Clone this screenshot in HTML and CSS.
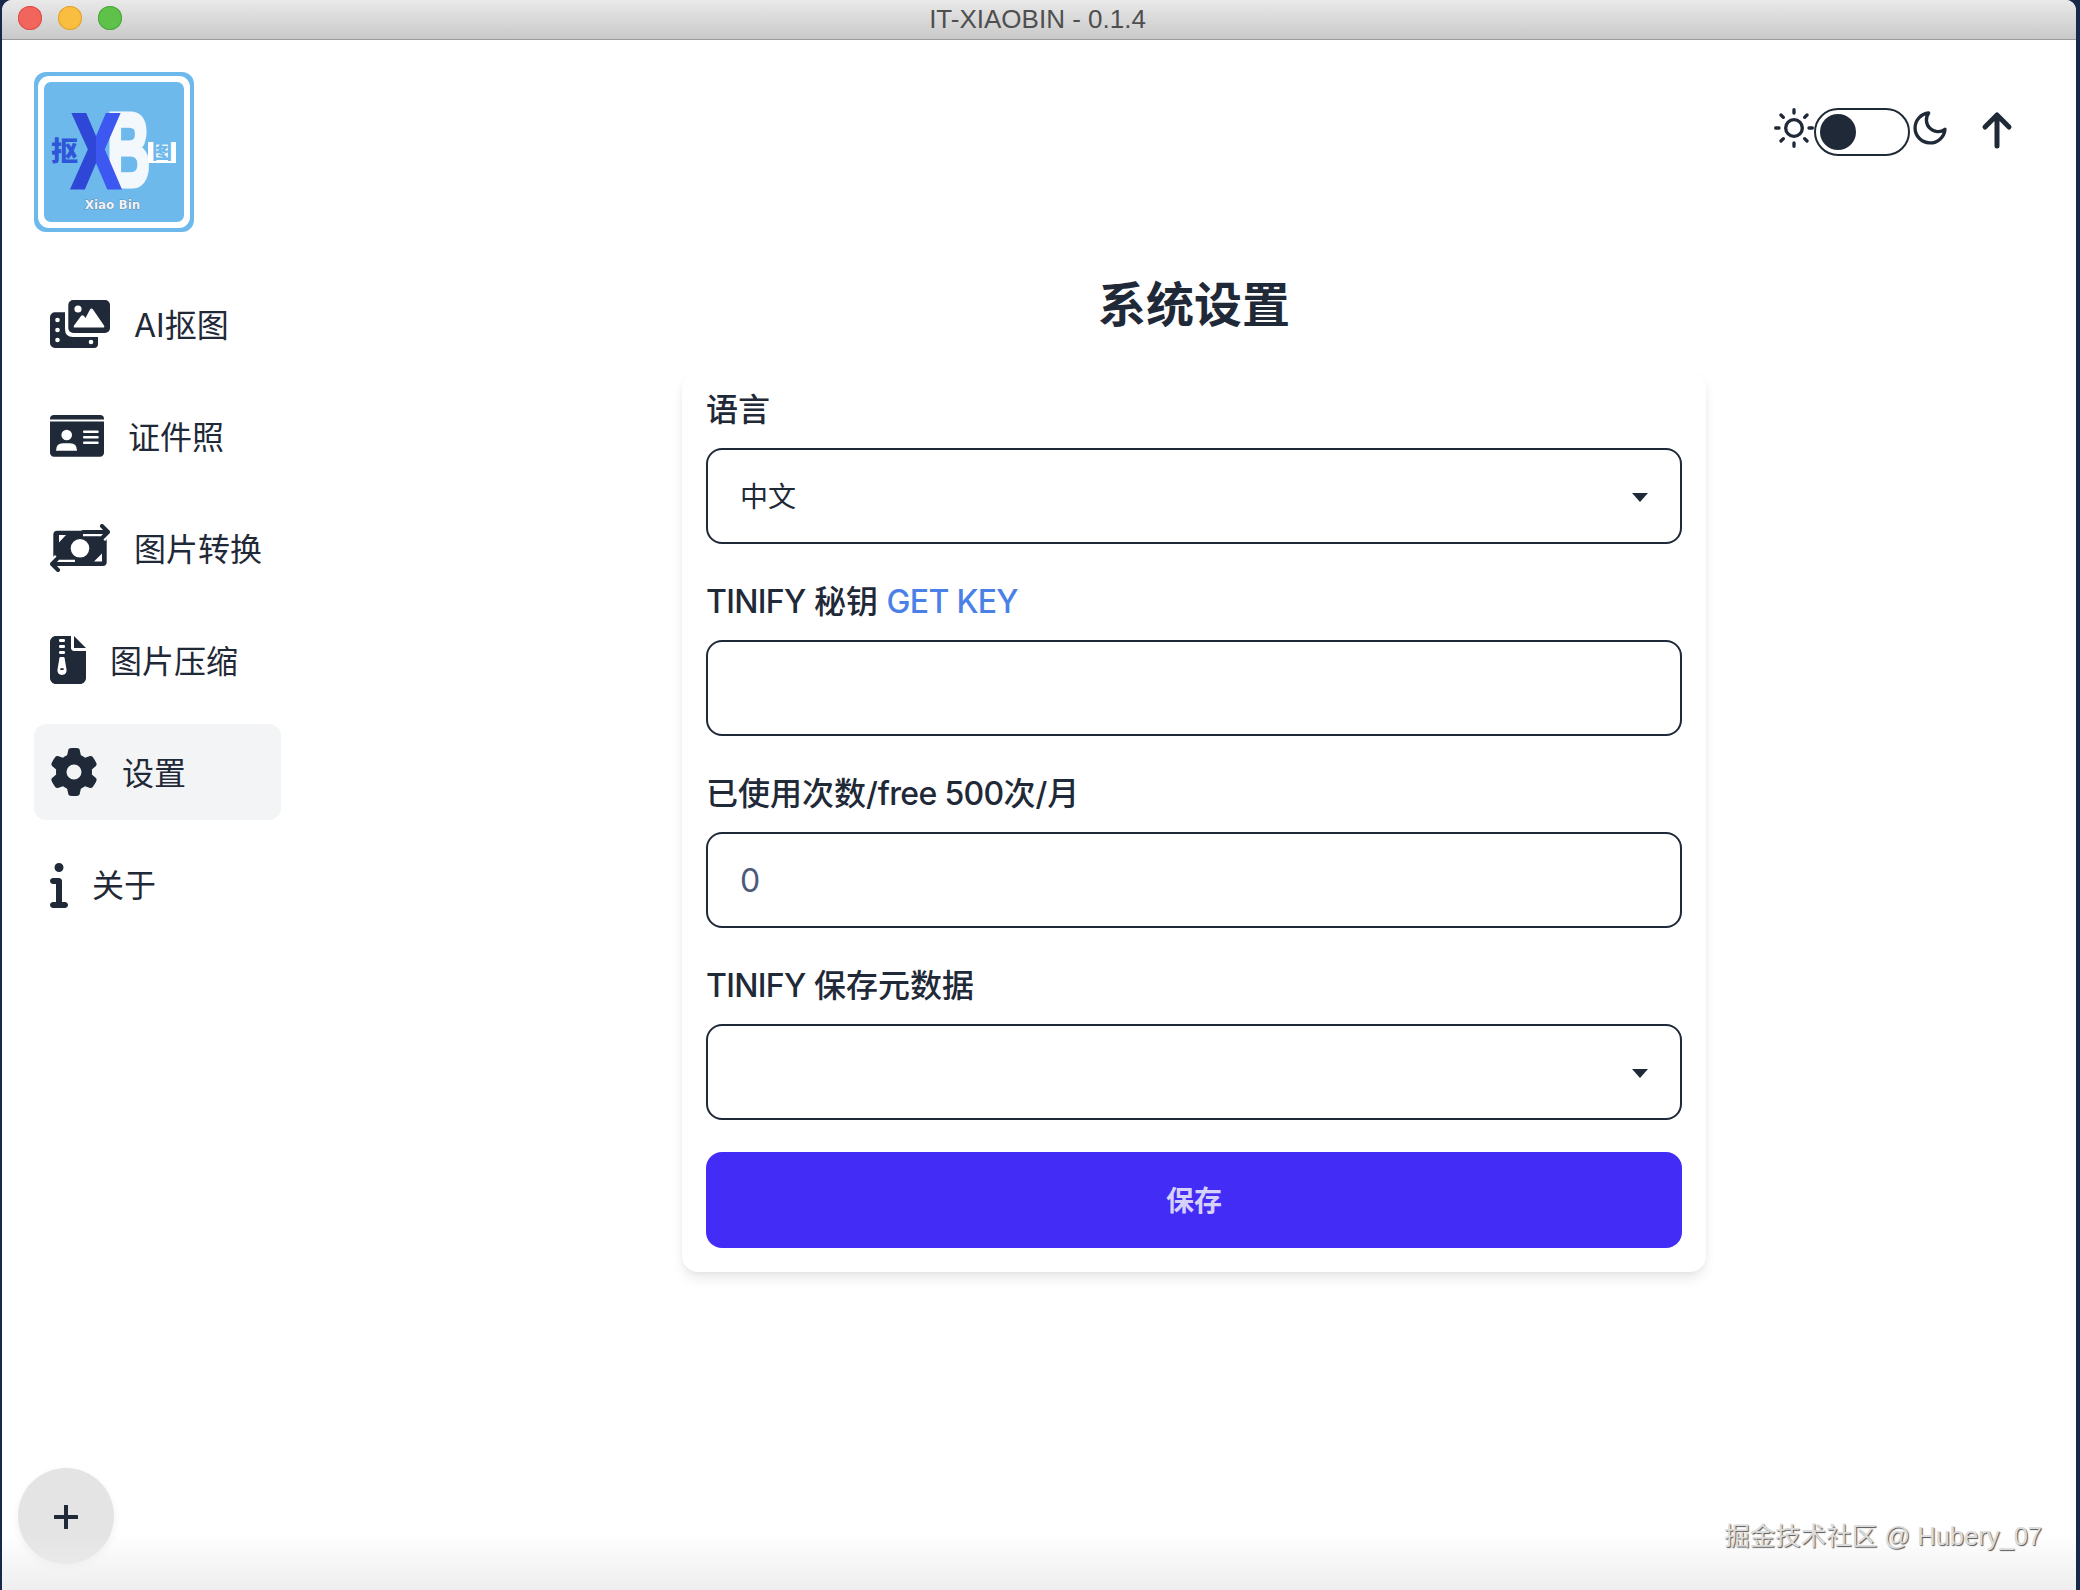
FILE: index.html
```html
<!DOCTYPE html>
<html lang="zh-CN">
<head>
<meta charset="utf-8">
<title>IT-XIAOBIN - 0.1.4</title>
<link rel="stylesheet" href="styles.css">
</head>
<body>
<div class="window">
  <header class="titlebar">
    <div class="lights">
      <span class="light light-red"></span>
      <span class="light light-yellow"></span>
      <span class="light light-green"></span>
    </div>
    <span class="window-title">IT-XIAOBIN - 0.1.4</span>
  </header>
  <div class="app">
    <aside class="sidebar">
      <svg class="logo" viewBox="0 0 160 160" aria-label="Xiao Bin">
        <defs>
          <linearGradient id="xfill" x1="0" x2="1" y1="0" y2="0">
            <stop offset="0.5" stop-color="#2f47d6"/>
            <stop offset="0.5" stop-color="#3c58f0"/>
          </linearGradient>
        </defs>
        <rect width="160" height="160" rx="12" fill="#6db9ec"/>
        <rect x="4" y="4" width="152" height="152" rx="11" fill="#fff"/>
        <rect x="10" y="10" width="140" height="140" rx="7" fill="#6db9ec"/>
        <text class="logo-b" x="73" y="114.500" transform="translate(73 0) scale(.58 1) translate(-73 0)">B</text>
        <text class="logo-x" x="38.500" y="114.500" stroke="url(#xfill)" fill="url(#xfill)" textLength="47" lengthAdjust="spacingAndGlyphs">X</text>
        <text class="logo-cjk logo-kou" x="17" y="89">抠</text>
        <rect x="114" y="70" width="28" height="21" fill="#fff"/>
        <text class="logo-cjk logo-tu" x="118" y="87">图</text>
        <text class="logo-name" x="78.500" y="137">Xiao Bin</text>
      </svg>
      <nav class="menu">
        <a class="menu-item">
          <svg class="icon icon-60" viewBox="0 0 60 48">
            <path d="M5 12.300H15V29Q15 37 23 37H48V44A4 4 0 0 1 44 48H5A5 5 0 0 1 0 43V17.300A5 5 0 0 1 5 12.300Z"/>
            <rect x="18.300" width="41.700" height="33" rx="5"/>
            <circle class="cut" cx="28" cy="9" r="3.600"/>
            <path class="cut" d="M25 27.500Q23 27.500 24 25.500L31 16Q32.500 14.500 34 16L35.500 18L40 9.500Q41.500 7.500 43 9.500L54 25.500Q55 27.500 53 27.500Z"/>
            <circle class="cut" cx="7.500" cy="20" r="2.300"/>
            <circle class="cut" cx="7.500" cy="30" r="2.300"/>
            <circle class="cut" cx="7.500" cy="40" r="2.300"/>
            <circle class="cut" cx="41" cy="42" r="2.300"/>
          </svg>
          <span>AI抠图</span>
        </a>
        <a class="menu-item">
          <svg class="icon icon-54" viewBox="0 0 54 42">
            <path d="M4 0H50A4 4 0 0 1 54 4V4.500H0V4A4 4 0 0 1 4 0Z"/>
            <path d="M0 6.500H54V37.500A4 4 0 0 1 50 41.700H4A4 4 0 0 1 0 37.500Z"/>
            <circle class="cut" cx="16.700" cy="20" r="5.300"/>
            <path class="cut" d="M6 35.700Q6 28.300 13 28.300H20Q27 28.300 27 35.700Z"/>
            <rect class="cut" x="33" y="15.500" width="15.700" height="2.600" rx="1"/>
            <rect class="cut" x="33" y="21" width="15.700" height="2.600" rx="1"/>
            <rect class="cut" x="33" y="26.500" width="15.700" height="2.600" rx="1"/>
          </svg>
          <span>证件照</span>
        </a>
        <a class="menu-item">
          <svg class="icon icon-60" viewBox="0 0 60 48">
            <rect x="3.300" y="6.700" width="53.400" height="35.300" rx="4"/>
            <circle class="cut" cx="30" cy="24.300" r="9.300"/>
            <path class="cut" d="M9 11H16L9 18.500Z"/>
            <path class="cut" d="M52 37.500H44L52 29.500Z"/>
            <path class="halo" d="M33 8H56M52 2L58 8L52 14"/>
            <path class="arrow" d="M33 8H56M52 2L58 8L52 14"/>
            <path class="halo" d="M25 40H4M8 34L2 40L8 46"/>
            <path class="arrow" d="M25 40H4M8 34L2 40L8 46"/>
          </svg>
          <span>图片转换</span>
        </a>
        <a class="menu-item">
          <svg class="icon icon-36" viewBox="0 0 384 512">
            <path d="M64 0C28.700 0 0 28.700 0 64V448c0 35.300 28.700 64 64 64H320c35.300 0 64-28.700 64-64V160H256c-17.700 0-32-14.300-32-32V0H64zM256 0V128H384L256 0z"/>
            <rect class="cut" x="96" y="32" width="64" height="32" rx="14"/>
            <rect class="cut" x="96" y="96" width="64" height="32" rx="14"/>
            <rect class="cut" x="96" y="160" width="64" height="32" rx="14"/>
            <path class="cut" d="M112 224h32q10 0 12 12l20 122c5 38-20 58-48 58s-53-20-48-58l20-122q2-12 12-12z"/>
            <rect x="108" y="344" width="40" height="18" rx="9"/>
          </svg>
          <span>图片压缩</span>
        </a>
        <a class="menu-item menu-item-active">
          <svg class="icon icon-48" viewBox="0 0 512 512">
            <path d="M495.900 166.600c3.200 8.700 .5 18.400-6.400 24.600l-43.300 39.400c1.100 8.300 1.700 16.800 1.700 25.400s-.6 17.100-1.700 25.400l43.300 39.400c6.900 6.200 9.600 15.900 6.400 24.600c-4.400 11.900-9.700 23.300-15.800 34.300l-4.700 8.100c-6.600 11-14 21.400-22.100 31.200c-5.900 7.200-15.700 9.600-24.500 6.800l-55.700-17.700c-13.400 10.300-28.200 18.900-44 25.400l-12.500 57.100c-2 9.100-9 16.300-18.200 17.800c-13.800 2.300-28 3.500-42.500 3.500s-28.700-1.200-42.500-3.500c-9.200-1.500-16.200-8.700-18.200-17.800l-12.500-57.100c-15.800-6.500-30.600-15.100-44-25.400L83.100 425.900c-8.800 2.800-18.600 .3-24.500-6.800c-8.100-9.800-15.500-20.200-22.100-31.200l-4.700-8.100c-6.100-11-11.400-22.400-15.800-34.300c-3.200-8.700-.5-18.400 6.400-24.600l43.300-39.400C64.600 273.100 64 264.600 64 256s.6-17.100 1.700-25.400L22.400 191.200c-6.900-6.200-9.600-15.900-6.400-24.600c4.400-11.900 9.700-23.300 15.800-34.300l4.700-8.100c6.600-11 14-21.400 22.100-31.200c5.900-7.200 15.700-9.600 24.500-6.800l55.700 17.700c13.400-10.300 28.200-18.900 44-25.400l12.500-57.100c2-9.100 9-16.300 18.200-17.800C227.300 1.200 241.500 0 256 0s28.700 1.200 42.500 3.500c9.200 1.500 16.200 8.700 18.200 17.800l12.500 57.100c15.800 6.500 30.600 15.100 44 25.400l55.700-17.700c8.800-2.800 18.600-.3 24.500 6.800c8.100 9.800 15.500 20.200 22.100 31.200l4.700 8.100c6.100 11 11.400 22.400 15.800 34.300zM256 336a80 80 0 1 0 0-160 80 80 0 1 0 0 160z"/>
          </svg>
          <span>设置</span>
        </a>
        <a class="menu-item">
          <svg class="icon icon-18" viewBox="0 0 192 512">
            <path d="M48 80a48 48 0 1 1 96 0A48 48 0 1 1 48 80zM0 224c0-17.700 14.300-32 32-32H96c17.700 0 32 14.300 32 32V448h32c17.700 0 32 14.300 32 32s-14.300 32-32 32H32c-17.700 0-32-14.300-32-32s14.300-32 32-32H64V256H32c-17.700 0-32-14.300-32-32z"/>
          </svg>
          <span>关于</span>
        </a>
      </nav>
    </aside>
    <main class="main">
      <div class="topbar">
        <svg class="theme-icon" viewBox="0 0 24 24">
          <circle cx="12" cy="12" r="5"/>
          <path d="M12 1v2M12 21v2M4.200 4.200l1.400 1.400M18.400 18.400l1.400 1.400M1 12h2M21 12h2M4.200 19.800l1.400-1.400M18.400 5.600l1.400-1.400"/>
        </svg>
        <span class="toggle"><span class="toggle-knob"></span></span>
        <svg class="theme-icon" viewBox="0 0 24 24">
          <path d="M21 12.790A9 9 0 1 1 11.210 3 7 7 0 0 0 21 12.790z"/>
        </svg>
        <svg class="up-icon" viewBox="0 0 48 48">
          <path d="M24 7V38M12 19L24 7L36 19"/>
        </svg>
      </div>
      <h1 class="page-title">系统设置</h1>
      <form class="card">
        <div class="field">
          <label class="field-label">语言</label>
          <div class="select-wrap">
            <select class="control">
              <option>中文</option>
            </select>
          </div>
        </div>
        <div class="field">
          <label class="field-label"><span class="latin">TINIFY</span> 秘钥 <a class="link latin">GET KEY</a></label>
          <input class="control" type="text">
        </div>
        <div class="field">
          <label class="field-label">已使用次数/<span class="latin">free 500</span>次/月</label>
          <input class="control control-muted" type="text" value="0">
        </div>
        <div class="field">
          <label class="field-label"><span class="latin">TINIFY</span> 保存元数据</label>
          <div class="select-wrap">
            <select class="control">
              <option></option>
            </select>
          </div>
        </div>
        <button class="save" type="button">保存</button>
      </form>
    </main>
  </div>
  <button class="fab" type="button" aria-label="add">
    <svg viewBox="0 0 24 24"><path d="M1 12H23M12 1V23"/></svg>
  </button>
  <div class="bottom-fade"></div>
  <span class="watermark">掘金技术社区 @ Hubery_07</span>
</div>
</body>
</html>
```

FILE: styles.css
```css
* {
  box-sizing: border-box;
}

html,
body {
  margin: 0;
  height: 100%;
}

body {
  background: #16294a;
  overflow: hidden;
  font-family: Inter, "Noto Sans CJK SC", sans-serif;
  color: #1f2937;
}

.window {
  position: relative;
  margin-left: 2px;
  width: 2074px;
  height: 1590px;
  background: #fff;
  border-radius: 10px 10px 0 0;
  overflow: hidden;
  display: flex;
  flex-direction: column;
}

.titlebar {
  position: relative;
  flex: none;
  height: 40px;
  display: flex;
  align-items: center;
  justify-content: center;
  background: linear-gradient(#e9e9e9, #c9c9c9);
  border-bottom: 1px solid #9c9c9c;
}

.lights {
  position: absolute;
  left: 16px;
  top: 6px;
  display: flex;
  gap: 16px;
}

.light {
  width: 24px;
  height: 24px;
  border-radius: 50%;
}

.light-red {
  background: #f2655c;
  box-shadow: inset 0 0 0 1px #db4f47;
}

.light-yellow {
  background: #f9bd40;
  box-shadow: inset 0 0 0 1px #dfa232;
}

.light-green {
  background: #5ec24a;
  box-shadow: inset 0 0 0 1px #4aa639;
}

.window-title {
  font-family: "Liberation Sans", sans-serif;
  font-size: 26px;
  color: #4f4f4f;
  line-height: 36px;
  margin: -2px 3px 0 0;
}

.app {
  flex: 1;
  display: flex;
  min-height: 0;
}

.sidebar {
  flex: none;
  width: 310px;
  padding: 32px 0 0 32px;
}

.logo {
  display: block;
  width: 160px;
  height: 160px;
}

.logo-x,
.logo-b {
  font-family: "Liberation Sans", sans-serif;
  font-weight: 700;
  font-size: 103px;
  stroke-width: 5px;
  stroke-linejoin: miter;
}

.logo-b {
  fill: #f3f8fd;
  stroke: #f3f8fd;
}

.logo-cjk {
  font-family: "Noto Sans CJK SC", sans-serif;
  font-weight: 900;
  font-size: 27px;
}

.logo-kou {
  fill: #2f55d8;
}

.logo-tu {
  fill: #6db9ec;
  font-size: 20px;
}

.logo-name {
  font-family: "DejaVu Sans", sans-serif;
  font-weight: 700;
  font-size: 12px;
  text-anchor: middle;
  fill: #eef4fa;
  paint-order: stroke;
  stroke: #51657e;
  stroke-width: .6px;
}

.menu {
  width: 247px;
  margin-top: 44px;
  display: flex;
  flex-direction: column;
  gap: 16px;
}

.menu-item {
  height: 96px;
  padding: 0 16px;
  display: flex;
  align-items: center;
  gap: 24px;
  border-radius: 12px;
  font-size: 32px;
}

.menu-item span {
  margin-bottom: 3px;
}

.menu-item-active {
  background: #f3f4f6;
}

.icon {
  flex: none;
  height: 48px;
  fill: #1f2937;
}

.icon-60 {
  width: 60px;
}

.icon-54 {
  width: 54px;
  height: 42px;
}

.icon-48 {
  width: 48px;
}

.icon-36 {
  width: 36px;
}

.icon-18 {
  width: 18px;
}

.icon .cut {
  fill: #fff;
}

.icon .halo {
  fill: none;
  stroke: #fff;
  stroke-width: 8.500;
}

.icon .arrow {
  fill: none;
  stroke: #1f2937;
  stroke-width: 4;
  stroke-linecap: round;
  stroke-linejoin: round;
}

.main {
  flex: 1;
  min-width: 0;
  display: flex;
  flex-direction: column;
  align-items: center;
}

.topbar {
  align-self: stretch;
  margin-top: 68px;
  padding-right: 55px;
  height: 48px;
  display: flex;
  justify-content: flex-end;
  align-items: flex-start;
}

.theme-icon {
  width: 40px;
  height: 40px;
  fill: none;
  stroke: #1f2937;
  stroke-width: 2;
  stroke-linecap: round;
  stroke-linejoin: round;
}

.toggle {
  width: 96px;
  height: 48px;
  padding: 4px 0 0 4px;
  border: 2px solid #1f2937;
  border-radius: 24px;
}

.toggle-knob {
  display: block;
  width: 36px;
  height: 36px;
  border-radius: 50%;
  background: #1f2937;
}

.up-icon {
  width: 48px;
  height: 48px;
  margin-left: 23px;
  fill: none;
  stroke: #1f2937;
  stroke-width: 5;
  stroke-linecap: round;
  stroke-linejoin: round;
}

.page-title {
  margin: 113px 0 31px;
  font-size: 48px;
  line-height: 72px;
  font-weight: 700;
}

.card {
  width: 1024px;
  padding: 12px 24px 24px;
  display: flex;
  flex-direction: column;
  gap: 32px;
  background: #fff;
  border-radius: 16px;
  box-shadow: 0 8px 14px -2px rgba(0, 0, 0, .09), 0 2px 6px -1px rgba(0, 0, 0, .05);
}

.field {
  display: flex;
  flex-direction: column;
  gap: 14px;
}

.field-label {
  padding-top: 2px;
  font-size: 32px;
  line-height: 48px;
  font-weight: 500;
}

.latin {
  letter-spacing: -.7px;
}

.link {
  color: #4a80e8;
}

.control {
  display: block;
  width: 100%;
  height: 96px;
  padding: 0 32px;
  border: 2px solid #1f2937;
  border-radius: 16px;
  background: #fff;
  color: #1f2937;
  font-family: inherit;
  font-size: 28px;
  appearance: none;
  outline: none;
}

select.control {
  padding-top: 2px;
}

.control-muted {
  color: #4b5b7c;
  font-size: 32px;
}

.select-wrap {
  position: relative;
}

.select-wrap::after {
  content: "";
  position: absolute;
  right: 34px;
  top: 45px;
  border-style: solid;
  border-width: 9px 8px 0;
  border-color: #1f2937 transparent transparent;
}

.save {
  height: 96px;
  padding: 0 0 2px;
  border: 0;
  border-radius: 16px;
  background: #422cf6;
  color: #d6d1fb;
  font-family: inherit;
  font-size: 28px;
  font-weight: 600;
}

.fab {
  position: absolute;
  left: 16px;
  bottom: 26px;
  width: 96px;
  height: 96px;
  padding: 2px 0 0;
  border: 0;
  border-radius: 50%;
  background: #e4e4e5;
  display: flex;
  align-items: center;
  justify-content: center;
  box-shadow: 0 4px 10px rgba(0, 0, 0, .06);
}

.fab svg {
  width: 24px;
  height: 24px;
  fill: none;
  stroke: #1f2937;
  stroke-width: 4;
  stroke-linecap: round;
}

.bottom-fade {
  position: absolute;
  left: 0;
  right: 0;
  bottom: 0;
  height: 56px;
  background: linear-gradient(rgba(238, 238, 238, 0), #eeeeee);
  pointer-events: none;
}

.watermark {
  position: absolute;
  right: 34px;
  bottom: 39px;
  font-family: "Liberation Sans", "Noto Sans CJK SC", sans-serif;
  font-size: 25.500px;
  line-height: 30px;
  color: #dcdcdc;
  text-shadow: 1px 1px 1px #555;
}
```
